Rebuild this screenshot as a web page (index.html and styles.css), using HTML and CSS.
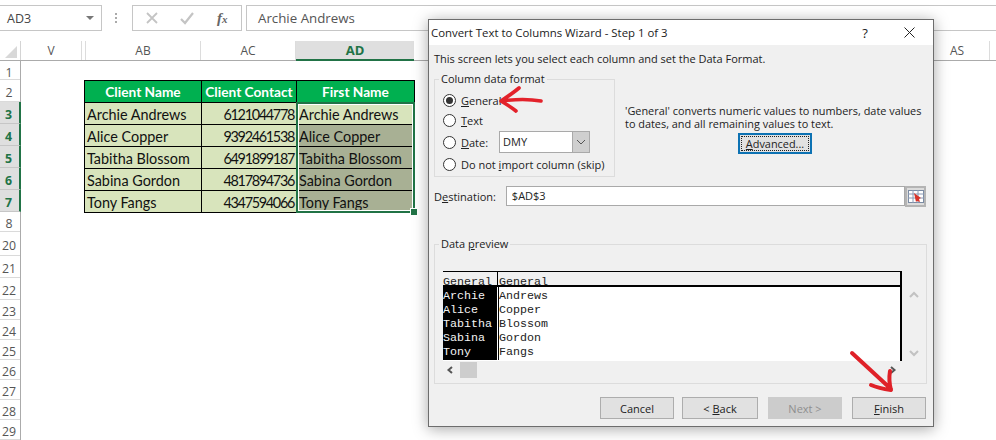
FILE: index.html
```html
<!DOCTYPE html>
<html lang="en">
<head>
<meta charset="utf-8">
<title>Convert Text to Columns Wizard</title>
<link rel="stylesheet" href="styles.css">
</head>
<body>
<div class="app">
  <div class="fbar">
    <div class="namebox"><span>AD3</span><i class="caret"></i></div>
    <div class="grip"><b></b><b></b><b></b></div>
    <div class="fbtns">
      <svg width="14" height="14" viewBox="0 0 14 14"><path d="M2 2l10 10M12 2L2 12" stroke="#c4c4c4" stroke-width="1.8" fill="none"/></svg>
      <svg width="16" height="14" viewBox="0 0 16 14"><path d="M2 8l4 4 8-10" stroke="#c4c4c4" stroke-width="2.2" fill="none"/></svg>
      <span class="fx">f<span class="fx-x">x</span></span>
    </div>
    <div class="finput">Archie Andrews</div>
  </div>

  <div class="colhead">
    <div class="corner"><i></i></div>
    <div class="ch w-v">V</div>
    <div class="ch w-gap"></div>
    <div class="ch w-ab">AB</div>
    <div class="ch w-ac">AC</div>
    <div class="ch w-ad sel">AD</div>
    <div class="ch w-rest"></div>
    <div class="ch w-as">AS</div>
    <div class="ch w-end"></div>
  </div>

  <div class="sheet">
    <div class="rowhead">
      <div class="rh h19">1</div>
      <div class="rh h22">2</div>
      <div class="rh h22 sel">3</div>
      <div class="rh h22 sel">4</div>
      <div class="rh h22 sel">5</div>
      <div class="rh h22 sel">6</div>
      <div class="rh h22 sel">7</div>
      <div class="rh h20">8</div>
      <div class="rh h24">20</div>
      <div class="rh h22">21</div>
      <div class="rh h22">22</div>
      <div class="rh h20">23</div>
      <div class="rh h20">24</div>
      <div class="rh h20">25</div>
      <div class="rh h20">26</div>
      <div class="rh h20">27</div>
      <div class="rh h20">28</div>
      <div class="rh h20">29</div>
    </div>
    <div class="grid-area">
      <table class="xl">
        <thead>
          <tr><th class="c1">Client Name</th><th class="c2">Client Contact</th><th class="c3">First Name</th></tr>
        </thead>
        <tbody>
          <tr><td>Archie Andrews</td><td class="num">6121044778</td><td>Archie Andrews</td></tr>
          <tr><td>Alice Copper</td><td class="num">9392461538</td><td class="shade">Alice Copper</td></tr>
          <tr><td>Tabitha Blossom</td><td class="num">6491899187</td><td class="shade">Tabitha Blossom</td></tr>
          <tr><td>Sabina Gordon</td><td class="num">4817894736</td><td class="shade">Sabina Gordon</td></tr>
          <tr><td>Tony Fangs</td><td class="num">4347594066</td><td class="shade">Tony Fangs</td></tr>
        </tbody>
      </table>
      <div class="selbox"><i class="handle"></i></div>
    </div>
  </div>

  <div class="dlg">
    <div class="dlg-title">
      <span class="dlg-name">Convert Text to Columns Wizard - Step 1 of 3</span>
      <span class="help">?</span>
      <svg class="close" width="13" height="13" viewBox="0 0 13 13"><path d="M1.5 1.5l10 10M11.5 1.5l-10 10" stroke="#222" stroke-width="1" fill="none"/></svg>
    </div>
    <div class="dlg-body">
      <p class="intro">This screen lets you select each column and set the Data Format.</p>
      <div class="toprow">
        <fieldset class="fmt">
          <legend>Column data format</legend>
          <label class="radio r1"><i class="dot on"></i><span><u>G</u>eneral</span></label>
          <label class="radio r2"><i class="dot"></i><span><u>T</u>ext</span></label>
          <label class="radio r3"><i class="dot"></i><span class="date-l"><u>D</u>ate:</span>
            <span class="combo"><span class="combo-v">DMY</span><span class="combo-b"><svg width="10" height="6" viewBox="0 0 10 6"><path d="M1 1l4 4 4-4" stroke="#555" fill="none"/></svg></span></span>
          </label>
          <label class="radio r4"><i class="dot"></i><span>Do not <u>i</u>mport column (skip)</span></label>
        </fieldset>
        <div class="desc">
          <p>'General' converts numeric values to numbers, date values<br>to dates, and all remaining values to text.</p>
          <button class="btn adv"><span><u>A</u>dvanced...</span></button>
        </div>
      </div>
      <div class="dest">
        <span class="dest-l">D<u>e</u>stination:</span>
        <div class="dest-i">$AD$3</div>
        <div class="refedit"><svg width="16" height="13" viewBox="0 0 16 13"><rect x=".5" y=".5" width="15" height="12" fill="#fff" stroke="#7b8ba3"/><path d="M0 4h16M0 8h16M5 0v13M10 0v13" stroke="#8a9ab5"/><path d="M6 3l7 5-2 1 1 3-3-1-1 1z" fill="#d8342a"/></svg></div>
      </div>
      <fieldset class="pv">
        <legend>Data <u>p</u>review</legend>
        <div class="pv-wrap">
          <div class="pv-table">
            <div class="pv-head"><span class="ph1">General</span><span class="ph2">General</span></div>
            <div class="pv-rows">
              <div class="pv-c1">Archie<br>Alice<br>Tabitha<br>Sabina<br>Tony</div>
              <div class="pv-c2">Andrews<br>Copper<br>Blossom<br>Gordon<br>Fangs</div>
            </div>
            <div class="hscroll">
              <svg width="8" height="8" viewBox="0 0 8 8"><path d="M6 1L2.5 4 6 7" stroke="#555" stroke-width="2" fill="none"/></svg>
              <i class="thumb"></i>
              <svg class="hs-right" width="8" height="8" viewBox="0 0 8 8"><path d="M2 1l3.5 3L2 7" stroke="#555" stroke-width="2" fill="none"/></svg>
            </div>
          </div>
          <div class="vscroll">
            <svg width="10" height="7" viewBox="0 0 10 7"><path d="M1 6l4-4 4 4" stroke="#c2c2c2" stroke-width="2" fill="none"/></svg>
            <svg width="10" height="7" viewBox="0 0 10 7"><path d="M1 1l4 4 4-4" stroke="#c2c2c2" stroke-width="2" fill="none"/></svg>
          </div>
        </div>
      </fieldset>
      <div class="actions">
        <button class="btn b-cancel">Cancel</button>
        <button class="btn b-back">&lt; <u>B</u>ack</button>
        <button class="btn b-next" disabled>Next &gt;</button>
        <button class="btn b-finish"><u>F</u>inish</button>
      </div>
    </div>
  </div>

  <svg class="arrow a1" width="50" height="28" viewBox="0 0 50 28"><path d="M45 15C34 13 20 13 5 15M23 2C17 7 11 11 5 15c5 3 10 6 15 10" stroke="#e3222b" stroke-width="3.6" fill="none" stroke-linecap="round" stroke-linejoin="round"/></svg>
  <svg class="arrow a2" width="50" height="50" viewBox="0 0 50 50"><path d="M4 3L43 39M42 21c-1 6-1 12 1 19-7-1-13-2-20-5" stroke="#df2128" stroke-width="4" fill="none" stroke-linecap="round" stroke-linejoin="round"/></svg>
</div>
</body>
</html>
```
FILE: styles.css
```css
* { box-sizing: border-box; }
html, body { margin: 0; padding: 0; background: #fff; }
.app { position: relative; width: 996px; height: 440px; overflow: hidden; font-family: "Open Sans", "Noto Sans", sans-serif; color: #222; background: #fff; }

/* formula bar */
.fbar { display: flex; height: 41px; padding-top: 5px; align-items: flex-start; }
.namebox { width: 102px; height: 26px; border: 1px solid #c6c6c6; border-left: 0; display: flex; align-items: center; justify-content: space-between; padding: 0 7px 0 7px; font-size: 12.5px; color: #444; }
.caret { width: 0; height: 0; border: 4px solid transparent; border-top: 4px solid #777; border-bottom: 0; }
.grip { width: 30px; height: 26px; display: flex; flex-direction: column; align-items: center; justify-content: center; gap: 2px; padding-right: 2px; }
.grip b { width: 2px; height: 2px; background: #aaa; }
.fbtns { width: 110px; height: 26px; border: 1px solid #c6c6c6; display: flex; align-items: center; gap: 20px; padding-left: 12px; }
.fx { font-family: "Liberation Serif", serif; font-style: italic; font-weight: bold; font-size: 15px; color: #666; margin-left: 2px; }
.fx-x { font-size: 11px; }
.finput { flex: 1; margin-left: 4px; height: 26px; border: 1px solid #c6c6c6; border-right: 0; padding-left: 11px; font-size: 13.3px; line-height: 24px; color: #555; }

/* column header */
.colhead { display: flex; height: 20px; border-bottom: 1px solid #ababab; }
.corner { width: 21px; background: #fff; border-right: 1px solid #d4d4d4; position: relative; }
.corner i { position: absolute; right: 3px; bottom: 2px; width: 0; height: 0; border-left: 12px solid transparent; border-bottom: 12px solid #d8d8d8; }
.ch { display: flex; align-items: center; justify-content: center; font-size: 12px; color: #555; border-right: 1px solid #dcdcdc; font-family: "Open Sans", sans-serif; }
.w-v { width: 61px; }
.w-gap { width: 4px; }
.w-ab { width: 115px; }
.w-ac { width: 95px; }
.w-ad { width: 118px; }
.ch.sel { background: #dfdfdf; color: #217346; font-weight: 700; font-size: 13px; border-bottom: 2px solid #217346; height: 20px; border-right: 0; }
.w-rest { width: 511px; border-right: 0; }
.w-as { width: 65px; }
.w-end { flex: 1; border-right: 0; }

/* sheet */
.sheet { display: flex; height: 379px; }
.rowhead { width: 21px; border-right: 1px solid #ababab; flex: none; }
.rh { display: flex; align-items: center; justify-content: center; font-size: 12.3px; color: #555; border-bottom: 1px solid #dadada; padding: 4px 2px 0 0; }
.h19 { height: 19px; }
.h20 { height: 20px; }
.h22 { height: 22px; }
.h24 { height: 24px; }
.rh.sel { background: #dfdfdf; color: #217346; font-weight: 700; border-right: 2px solid #217346; margin-right: -1px; border-bottom-color: #c6c6c6; }
.grid-area { position: relative; flex: 1; padding: 19px 0 0 63px; }
.xl { border-collapse: collapse; table-layout: fixed; width: 330px; font-family: "Lato", "Open Sans", sans-serif; font-size: 14.4px; color: #111; }
.xl th, .xl td { border: 1px solid #000; height: 22px; padding: 0 2px; white-space: nowrap; overflow: hidden; }
.xl th { background: #00b050; color: #fff; font-weight: 700; font-size: 13.7px; text-align: center; }
.xl td { background: #d8e4bc; padding-top: 2px; }
.xl td.num { text-align: right; letter-spacing: -1.3px; }
.xl td.shade { background: #a8b094; }
.c1 { width: 117px; }
.c2 { width: 95px; }
.c3 { width: 118px; }
.selbox { position: absolute; left: 275px; top: 41px; width: 119px; height: 111px; border: 2px solid #217346; box-shadow: inset 0 0 0 1px #fff; }
.handle { position: absolute; right: -4px; bottom: -4px; width: 6px; height: 6px; background: #217346; border: 0; outline: 1px solid #fff; }

/* dialog */
.dlg { position: absolute; left: 428px; top: 19px; width: 506px; height: 408px; border: 1px solid #6d6d6d; background: #f0f0f0; box-shadow: 0 2px 14px rgba(0,0,0,.35); font-size: 11px; color: #222; }
.dlg-title { height: 25px; background: #fff; display: flex; align-items: center; padding-left: 2px; }
.dlg-name { font-size: 11.4px; flex: 1; }
.help { width: 20px; font-size: 13px; text-align: center; margin-right: 28px; }
.close { margin-right: 17px; }
.dlg-body { padding: 6px 7px 0 5px; }
.intro { margin: 0; line-height: 16px; }
fieldset { margin: 0; border: 1px solid #dcdcdc; }
legend { padding: 0 2px; margin-left: -4px; line-height: 14px; }
.toprow { display: flex; margin-top: 5px; }
.fmt { width: 181px; height: 105px; padding: 4px 0 0 8px; flex: none; }
.radio { display: flex; align-items: center; gap: 5px; height: 20px; }
.r3 { height: 24px; }
.dot { width: 13px; height: 13px; border-radius: 50%; border: 1px solid #333; background: #fff; display: block; position: relative; flex: none; }
.dot.on::after { content: ""; position: absolute; left: 2px; top: 2px; width: 7px; height: 7px; border-radius: 50%; background: #333; }
.date-l { width: 26px; }
.combo { display: flex; width: 91px; height: 22px; border: 1px solid #a9a9a9; background: #fff; margin-left: 7px; }
.combo-v { flex: 1; padding-left: 3px; line-height: 20px; }
.combo-b { width: 17px; background: #cfcfcf; border-left: 1px solid #a9a9a9; display: flex; align-items: center; justify-content: center; }
.desc { flex: 1; padding: 32px 0 0 10px; line-height: 13px; white-space: nowrap; font-size: 10.9px; }
.desc p { margin: 0; }
.btn { font: inherit; color: #222; background: #e1e1e1; border: 1px solid #adadad; height: 22px; padding: 0; display: block; }
.adv { width: 74px; height: 21px; margin: 3px 0 0 113px; border: 2px solid #0d72b3; padding: 1px; }
.adv span { display: block; border: 1px dotted #222; height: 15px; line-height: 13px; }
.dest { display: flex; align-items: center; height: 20px; margin-top: 9px; }
.dest-l { width: 72px; }
.dest-i { width: 400px; height: 20px; background: #fff; border: 1px solid #a9a9a9; padding-left: 5px; line-height: 18px; }
.refedit { width: 21px; height: 21px; background: #dcdcdc; border: 2px solid #b4b4b4; display: flex; align-items: center; justify-content: center; }
.refedit svg { flex: none; }
.pv { height: 147px; margin-top: 31px; padding: 20px 0 0 8px; }
.pv-wrap { display: flex; }
.pv-table { width: 459px; font-family: "Liberation Mono", monospace; font-size: 11.67px; line-height: 14px; }
.pv-head { display: flex; height: 16px; border-top: 1px solid #000; border-bottom: 2px solid #000; border-right: 2px solid #000; }
.ph1 { width: 55px; border-right: 1px solid #000; padding-top: 4px; line-height: 12px; }
.ph2 { flex: 1; padding-left: 1px; padding-top: 4px; line-height: 12px; }
.pv-rows { display: flex; height: 74px; background: #fff; border-right: 2px solid #000; padding-bottom: 1px; }
.pv-c1 { width: 54px; background: #000; color: #f4f4f4; padding-top: 2px; height: 73px; }
.pv-c2 { flex: 1; margin-left: 1px; border-left: 1px solid #000; color: #222; padding-top: 2px; height: 73px; }
.hscroll { display: flex; align-items: center; height: 17px; padding: 0 5px 0 3px; gap: 6px; }
.hs-right { margin-left: auto; }
.thumb { width: 17px; height: 16px; background: #cdcdcd; }
.vscroll { width: 24px; padding: 20px 0 0 0; height: 90px; display: flex; flex-direction: column; align-items: center; gap: 52px; }
.actions { display: flex; justify-content: flex-end; margin-top: 13px; gap: 8px; }
.b-cancel { width: 74px; }
.b-back { width: 76px; }
.b-next { width: 74px; margin-left: 2px; background: #ccc; border-color: #ccc; color: #8f8f8f; }
.b-finish { width: 74px; margin-left: 2px; }
.arrow { position: absolute; }
.a1 { left: 496px; top: 86px; }
.a2 { left: 848px; top: 350px; }
```
